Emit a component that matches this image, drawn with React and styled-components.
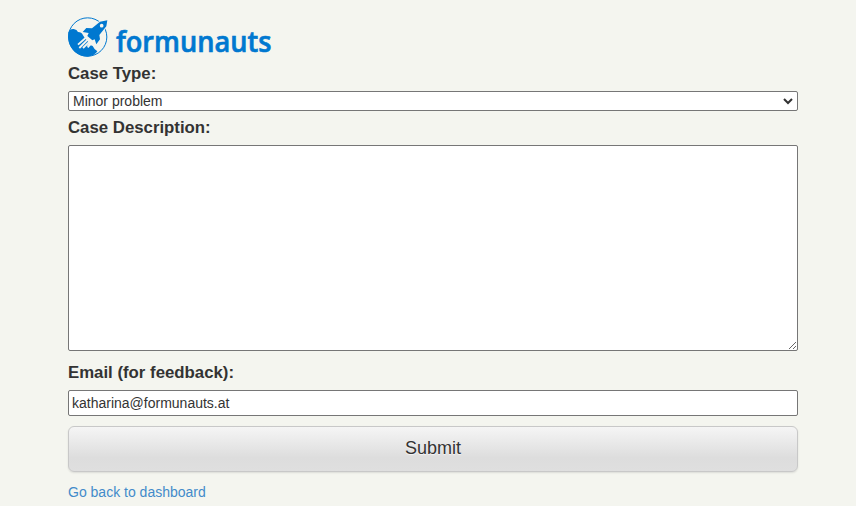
import { useState } from "react";
import styled, { createGlobalStyle } from "styled-components";

// Styled Components

const GlobalStyle = createGlobalStyle`
  * {
    box-sizing: border-box;
  }
  body {
    margin: 0;
    background: #f4f5ef;
    color: #333;
    font-family: "Liberation Sans", Arial, sans-serif;
    font-size: 14px;
    line-height: 20px;
    overflow: hidden;
  }
`;

const Page = styled.main`
  width: 730px;
  margin-left: 68px;
  padding-top: 16px;
`;

const LogoSvg = styled.svg`
  display: block;
  width: 206px;
  height: 42px;
  overflow: visible;
`;

const Form = styled.form`
  display: flex;
  flex-direction: column;
`;

const Label = styled.label`
  font-size: 16.8px;
  font-weight: bold;
  line-height: 20px;
  margin-top: ${(props) => props.$top}px;
  margin-bottom: 7px;
`;

const SelectWrapper = styled.div`
  position: relative;
  display: flex;
`;

const CaseSelect = styled.select`
  appearance: none;
  width: 100%;
  height: 20px;
  padding: 0 20px 0 4px;
  border: 1px solid #767676;
  border-radius: 2px;
  background-color: white;
  color: #333;
  font-family: inherit;
  font-size: 14px;
`;

const SelectArrow = styled.svg`
  position: absolute;
  top: 7px;
  right: 5px;
  width: 10px;
  height: 7px;
  pointer-events: none;
`;

const Description = styled.textarea`
  width: 100%;
  height: 206px;
  padding: 2px;
  border: 1px solid #767676;
  border-radius: 2px;
  font: inherit;
  color: #333;
`;

const EmailInput = styled.input`
  width: 100%;
  height: 26px;
  padding: 1px 3px;
  border: 1px solid #767676;
  border-radius: 2px;
  font: inherit;
  color: #333;
`;

const SubmitButton = styled.button`
  width: 100%;
  height: 46px;
  margin-top: 10px;
  padding: 0 0 1px;
  border: 1px solid #c8c8c8;
  border-radius: 6px;
  background: linear-gradient(to bottom, #f5f5f5, #dddddd 70%, #dfdfdf);
  box-shadow: 0 1px 2px rgba(0, 0, 0, 0.1);
  color: #333;
  font-family: inherit;
  font-size: 18px;
  text-shadow: 0 1px 1px rgba(255, 255, 255, 0.75);
`;

const BackLink = styled.a`
  display: inline-block;
  margin-top: 10px;
  color: #428bca;
  text-decoration: none;
`;

function Logo() {
  return (
    <LogoSvg viewBox="24 18 618 126" role="img" aria-label="formunauts">
      <circle cx="83" cy="81" r="57.5" fill="none" stroke="#0078d0" strokeWidth="3" />
      {/* Cloud and ground */}
      <path
        d="M25 67 Q29 56 41 57 Q51 58 54 66 Q65 66 69 76 L74 83 L87 98 L79 109 Q90 103 98 108 Q103 119 112 124 Q103 139 83 140 C49 140 21 113 25 67Z"
        fill="#0078d0"
      />
      {/* Rocket */}
      <path
        d="M142 31 L139 49 L118 75 L120 88 L109 103 L104 88 L97 91 L82 78 L86 69 L68 66 L79 54 L96 55 L120 35Z"
        fill="#0078d0"
        stroke="#f4f5ef"
        strokeWidth="5"
        paintOrder="stroke"
      />
      <circle cx="125" cy="47" r="5.5" fill="#f4f5ef" />
      {/* Exhaust */}
      <path
        d="M80 81 L54 104 M86 86 L58 114 M92 91 L69 114 M98 95 L83 112"
        fill="none"
        stroke="#f4f5ef"
        strokeWidth="5.5"
      />
      <text
        x="168"
        y="127"
        fill="#0078d0"
        stroke="#0078d0"
        strokeWidth="2"
        fontFamily="'Open Sans', 'Noto Sans', sans-serif"
        fontSize="88"
        fontWeight="600"
        textLength="466"
        lengthAdjust="spacingAndGlyphs"
      >
        formunauts
      </text>
    </LogoSvg>
  );
}

export default function App() {
  const [caseType, setCaseType] = useState("minor");
  const [description, setDescription] = useState("");
  const [email, setEmail] = useState("katharina@formunauts.at");

  const handleSubmit = (event) => {
    event.preventDefault();
  };

  return (
    <>
      <GlobalStyle />
      <Page>
        <Logo />
        <Form onSubmit={handleSubmit}>
          <Label htmlFor="type" $top={6}>
            Case Type:
          </Label>
          <SelectWrapper>
            <CaseSelect
              id="type"
              value={caseType}
              onChange={(event) => setCaseType(event.target.value)}
            >
              <option value="minor">Minor problem</option>
            </CaseSelect>
            <SelectArrow viewBox="0 0 10 7">
              <path d="M1 1 L5 5 L9 1" fill="none" stroke="#333" strokeWidth="2" />
            </SelectArrow>
          </SelectWrapper>
          <Label htmlFor="description" $top={7}>
            Case Description:
          </Label>
          <Description
            id="description"
            value={description}
            onChange={(event) => setDescription(event.target.value)}
          />
          <Label htmlFor="email" $top={12}>
            Email (for feedback):
          </Label>
          <EmailInput
            id="email"
            value={email}
            onChange={(event) => setEmail(event.target.value)}
          />
          <SubmitButton type="submit">Submit</SubmitButton>
        </Form>
        <BackLink href="#">Go back to dashboard</BackLink>
      </Page>
    </>
  );
}
